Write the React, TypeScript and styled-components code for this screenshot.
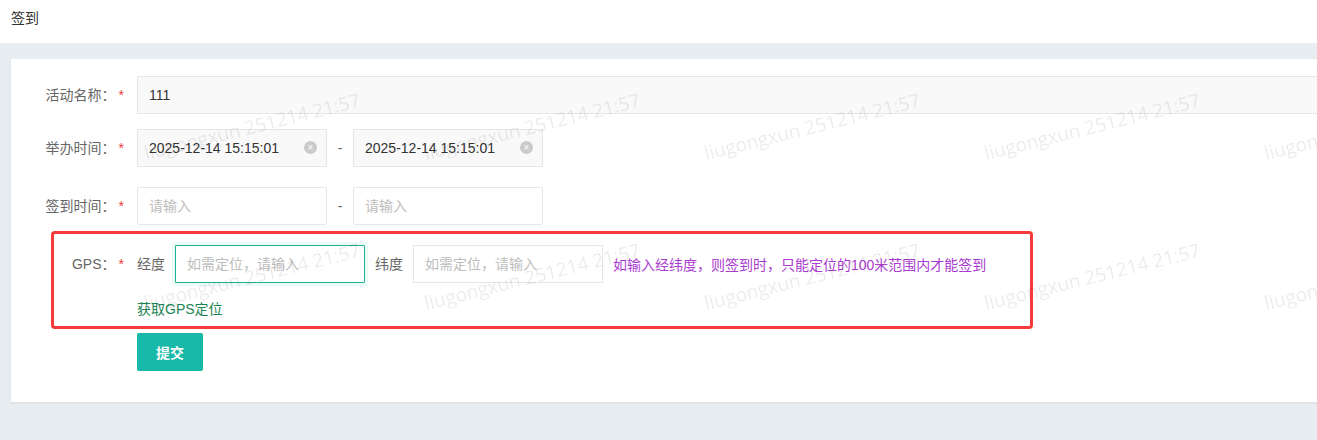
import React from "react";
import styled, { createGlobalStyle } from "styled-components";

const GlobalStyle = createGlobalStyle`
  html, body {
    margin: 0;
    padding: 0;
    background: #e7edf0;
  }
  body {
    font-family: "Liberation Sans", "Noto Sans CJK SC", sans-serif;
    color: #333;
  }
  * {
    box-sizing: border-box;
  }
`;

const Page = styled.div`
  width: 100%;
  height: 440px;
  overflow: hidden;
  background: #e7edf0;
`;

const Header = styled.header`
  height: 43px;
  background: #fff;
  padding: 8px 11px 0;
  font-size: 14px;
  line-height: 21px;
  color: #333;
`;

const Card = styled.section`
  position: relative;
  margin: 16px -40px 0 11px;
  padding: 17px 0 31px;
  background: #fff;
  box-shadow: 0 1px 2px rgba(0, 0, 0, 0.08);
  overflow: hidden;
`;

const Row = styled.div<{ $gap: number }>`
  display: flex;
  align-items: flex-start;
  margin-bottom: ${(p) => p.$gap}px;
`;

const GpsItem = styled.div`
  position: relative;
  display: flex;
  align-items: flex-start;
`;

const Highlight = styled.div`
  position: absolute;
  top: -14px;
  bottom: -10px;
  left: 40px;
  width: 982px;
  border: 3px solid #f53b3b;
  border-radius: 4px;
  pointer-events: none;
`;

const Label = styled.label`
  flex: 0 0 126px;
  padding-right: 13px;
  text-align: right;
  font-size: 14px;
  line-height: 38px;
  color: #666;
`;

const Star = styled.span`
  margin-left: 3px;
  color: #ee3b3b;
`;

const Field = styled.div<{ $grow?: boolean }>`
  position: relative;
  display: flex;
  align-items: center;
  width: ${(p) => (p.$grow ? "auto" : "190px")};
  flex: ${(p) => (p.$grow ? "1" : "0 0 190px")};
`;

const Input = styled.input<{ $readOnlyLook?: boolean; $focused?: boolean }>`
  width: 100%;
  height: 38px;
  padding: 0 11px;
  border: 1px solid ${(p) => (p.$focused ? "#1ab394" : "#e5e6e7")};
  border-radius: 1px;
  background: ${(p) => (p.$readOnlyLook ? "#f9f9f9" : "#fff")};
  box-shadow: ${(p) => (p.$focused ? "0 0 0 3px rgba(26, 179, 148, 0.08)" : "none")};
  font-family: "Liberation Sans", "Noto Sans CJK SC", sans-serif;
  font-size: 14px;
  color: #333;
  outline: none;
  caret-color: #000;

  &::placeholder {
    color: #bdbdbd;
  }
`;

const ClearIcon = styled.span`
  position: absolute;
  right: 10px;
  top: 12px;
  width: 13px;
  height: 13px;
  border-radius: 50%;
  background: #cacaca;
  color: #fff;
  font-size: 10px;
  line-height: 13px;
  text-align: center;
`;

const Dash = styled.span`
  flex: 0 0 26px;
  text-align: center;
  font-size: 14px;
  line-height: 38px;
  color: #666;
`;

const Content = styled.div`
  display: flex;
  flex-direction: column;
`;

const GpsLine = styled.div`
  display: flex;
  align-items: center;
`;

const SubLabel = styled.span`
  font-size: 14px;
  line-height: 38px;
  color: #666;
  margin-right: 10px;
`;

const Spacer = styled.span`
  width: 10px;
`;

const Tip = styled.span`
  margin-left: 10px;
  font-size: 14px;
  color: #aa3bd1;
`;

const LocateLink = styled.a`
  margin-top: 16px;
  font-size: 14px;
  line-height: 20px;
  color: #1c8453;
  text-decoration: none;
  cursor: pointer;
`;

const SubmitRow = styled.div`
  margin: 14px 0 0 126px;
`;

const SubmitButton = styled.button`
  width: 66px;
  height: 38px;
  border: none;
  border-radius: 2px;
  background: #18b9a8;
  color: #fff;
  font-family: "Liberation Sans", "Noto Sans CJK SC", sans-serif;
  font-size: 14px;
  font-weight: 700;
  cursor: pointer;
`;

const WatermarkLayer = styled.div`
  position: absolute;
  inset: 0;
  pointer-events: none;
  z-index: 2;
`;

const Mark = styled.span`
  position: absolute;
  font-family: "Open Sans", sans-serif;
  font-size: 19px;
  line-height: 19px;
  color: rgba(0, 0, 0, 0.08);
  white-space: nowrap;
  transform-origin: 0 100%;
  transform: rotate(-14deg);
`;

function Watermark(): JSX.Element {
  const marks = [];
  for (let r = 0; r < 2; r++) {
    for (let c = 0; c < 5; c++) {
      marks.push({ left: 136 + c * 280, top: 85 + r * 150, key: `${r}-${c}` });
    }
  }
  return (
    <WatermarkLayer>
      {marks.map((m) => (
        <Mark key={m.key} style={{ left: m.left, top: m.top }}>
          liugongxun 251214 21:57
        </Mark>
      ))}
    </WatermarkLayer>
  );
}

function DateField({ value }: { value: string }): JSX.Element {
  return (
    <Field>
      <Input $readOnlyLook readOnly value={value} />
      <ClearIcon>×</ClearIcon>
    </Field>
  );
}

export default function App(): JSX.Element {
  return (
    <Page>
      <GlobalStyle />
      <Header>签到</Header>
      <Card>
        <Row $gap={15}>
          <Label>
            活动名称：<Star>*</Star>
          </Label>
          <Field $grow>
            <Input $readOnlyLook readOnly value="111" />
          </Field>
        </Row>
        <Row $gap={20}>
          <Label>
            举办时间：<Star>*</Star>
          </Label>
          <DateField value="2025-12-14 15:15:01" />
          <Dash>-</Dash>
          <DateField value="2025-12-14 15:15:01" />
        </Row>
        <Row $gap={20}>
          <Label>
            签到时间：<Star>*</Star>
          </Label>
          <Field>
            <Input placeholder="请输入" />
          </Field>
          <Dash>-</Dash>
          <Field>
            <Input placeholder="请输入" />
          </Field>
        </Row>
        <GpsItem>
          <Highlight />
          <Label>
            GPS：<Star>*</Star>
          </Label>
          <Content>
            <GpsLine>
              <SubLabel>经度</SubLabel>
              <Field>
                <Input $focused autoFocus placeholder="如需定位，请输入" />
              </Field>
              <Spacer />
              <SubLabel>纬度</SubLabel>
              <Field>
                <Input placeholder="如需定位，请输入" />
              </Field>
              <Tip>如输入经纬度，则签到时，只能定位的100米范围内才能签到</Tip>
            </GpsLine>
            <LocateLink>获取GPS定位</LocateLink>
          </Content>
        </GpsItem>
        <SubmitRow>
          <SubmitButton>提交</SubmitButton>
        </SubmitRow>
        <Watermark />
      </Card>
    </Page>
  );
}
